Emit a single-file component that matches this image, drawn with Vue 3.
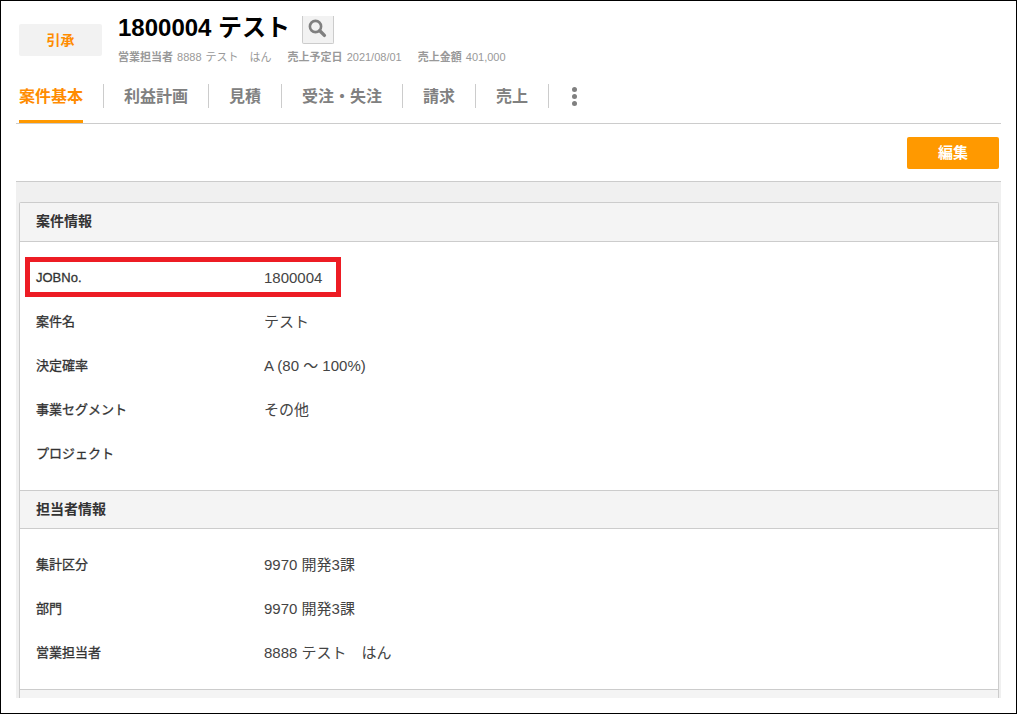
<script setup>
const tabs = ['利益計画', '見積', '受注・失注', '請求', '売上']
const sections = [
  {
    title: '案件情報',
    rows: [
      ['JOBNo.', '1800004'],
      ['案件名', 'テスト'],
      ['決定確率', 'A (80 ～ 100%)'],
      ['事業セグメント', 'その他'],
      ['プロジェクト', '']
    ]
  },
  {
    title: '担当者情報',
    rows: [
      ['集計区分', '9970 開発3課'],
      ['部門', '9970 開発3課'],
      ['営業担当者', '8888 テスト　はん']
    ]
  }
]
</script>

<template>
  <div class="screen">
    <header class="head">
      <div class="status">引承</div>
      <div class="summary">
        <div class="title-row">
          <h1 class="title">1800004 テスト</h1>
          <button class="search" aria-label="検索">
            <svg width="20" height="20" viewBox="0 0 20 20" fill="none" stroke="#808080">
              <circle cx="8.5" cy="8.5" r="5.6" stroke-width="2.6" />
              <path d="M12.8 12.8 L17.4 17.4" stroke-width="3.4" stroke-linecap="round" />
            </svg>
          </button>
        </div>
        <div class="meta">
          <span><b>営業担当者</b> 8888 テスト　はん</span>
          <span><b>売上予定日</b> 2021/08/01</span>
          <span><b>売上金額</b> 401,000</span>
        </div>
      </div>
    </header>

    <nav class="tabs">
      <a class="tab active">案件基本</a>
      <template v-for="t in tabs" :key="t">
        <i class="sep"></i>
        <a class="tab">{{ t }}</a>
      </template>
      <i class="sep"></i>
      <span class="more"><i></i><i></i><i></i></span>
    </nav>

    <div class="actions">
      <button class="edit">編集</button>
    </div>

    <main class="body">
      <div class="card">
        <section v-for="s in sections" :key="s.title" class="section">
          <h2 class="section-title">{{ s.title }}</h2>
          <div class="rows">
            <div v-for="r in s.rows" :key="r[0]" class="row">
              <div class="label">{{ r[0] }}</div>
              <div class="value">{{ r[1] }}</div>
            </div>
          </div>
        </section>
        <div class="section-title next"></div>
        <div class="highlight"></div>
      </div>
    </main>
  </div>
</template>

<style>
html, body { margin: 0; background: #fff; }
</style>

<style scoped>
.screen {
  box-sizing: border-box;
  width: 1017px;
  height: 714px;
  border: 1px solid #000;
  padding: 0 15px 15px;
  display: flex;
  flex-direction: column;
  overflow: hidden;
  background: #fff;
  color: #333;
  font-family: "Liberation Sans", "Noto Sans CJK JP", sans-serif;
}
.head {
  display: flex;
  height: 69px;
  padding: 15px 0 0 3px;
  box-sizing: border-box;
}
.status {
  width: 83px;
  height: 32px;
  margin-top: 8px;
  background: #f2f2f2;
  border-radius: 2px;
  color: #ff8c00;
  font-size: 14px;
  font-weight: 700;
  line-height: 32px;
  text-align: center;
}
.summary { margin-left: 16px; }
.title-row {
  display: flex;
  align-items: flex-start;
  gap: 12px;
  height: 28px;
}
.title {
  margin: 0;
  color: #000;
  font-size: 24px;
  font-weight: 700;
  line-height: 24px;
}
.search {
  box-sizing: border-box;
  width: 32px;
  height: 28px;
  padding: 0;
  border: 1px solid #ccc;
  border-top: 0;
  border-radius: 0 0 2px 2px;
  background: #f2f2f2;
  display: flex;
  align-items: center;
  justify-content: center;
}
.search svg { margin: 0 2px 4px 0; }
.meta {
  display: flex;
  gap: 16px;
  margin-top: 6px;
  color: #999;
  font-size: 11px;
  line-height: 14px;
  word-spacing: 1px;
  white-space: pre;
}
.meta b { font-weight: 700; color: #999; }
.tabs {
  display: flex;
  align-items: flex-start;
  height: 54px;
  box-sizing: border-box;
  padding-left: 3px;
  border-bottom: 1px solid #ccc;
}
.tab {
  height: 24px;
  margin-top: 14px;
  color: #808080;
  font-size: 16px;
  font-weight: 700;
  line-height: 26px;
}
.tab.active {
  height: 39px;
  box-sizing: border-box;
  color: #ff8c00;
  border-bottom: 3px solid #ff9900;
}
.sep {
  width: 1px;
  height: 24px;
  margin: 14px 20px 0;
  background: #ccc;
}
.more {
  display: flex;
  flex-direction: column;
  gap: 2px;
  margin: 17px 0 0 3px;
}
.more i {
  width: 5px;
  height: 5px;
  border-radius: 50%;
  background: #808080;
}
.actions {
  display: flex;
  justify-content: flex-end;
  height: 58px;
  padding: 13px 2px 0 0;
  box-sizing: border-box;
  border-bottom: 1px solid #ccc;
}
.edit {
  box-sizing: border-box;
  width: 92px;
  height: 32px;
  padding: 0 0 3px;
  border: 0;
  border-radius: 2px;
  background: #ff9900;
  color: #fff;
  font-family: inherit;
  font-size: 15px;
  font-weight: 700;
}
.body {
  flex: 1;
  min-height: 0;
  overflow: hidden;
  padding: 20px 2px 0 3px;
  background: #f0f0f0;
}
.card {
  position: relative;
  box-sizing: border-box;
  min-height: 100%;
  border: 1px solid #ccc;
  border-bottom: 0;
  border-radius: 2px 2px 0 0;
  background: #fff;
}
.section-title {
  box-sizing: border-box;
  height: 39px;
  margin: 0;
  padding-left: 16px;
  border-bottom: 1px solid #ccc;
  background: #f4f4f4;
  color: #333;
  font-size: 14px;
  font-weight: 700;
  line-height: 37px;
}
.section + .section .section-title,
.next { border-top: 1px solid #ccc; }
.rows { padding: 13px 0 15px; }
.row {
  box-sizing: border-box;
  display: flex;
  align-items: center;
  height: 44px;
  padding: 2px 0 0 16px;
  line-height: 20px;
}
.label {
  width: 228px;
  color: #333;
  font-size: 13px;
  font-weight: 400;
  -webkit-text-stroke: 0.3px #333;
}
.value {
  color: #444;
  font-size: 15px;
  white-space: pre;
}
.highlight {
  position: absolute;
  left: 5px;
  top: 54px;
  box-sizing: border-box;
  width: 316px;
  height: 40px;
  border: 5px solid #ed1c24;
}
</style>
